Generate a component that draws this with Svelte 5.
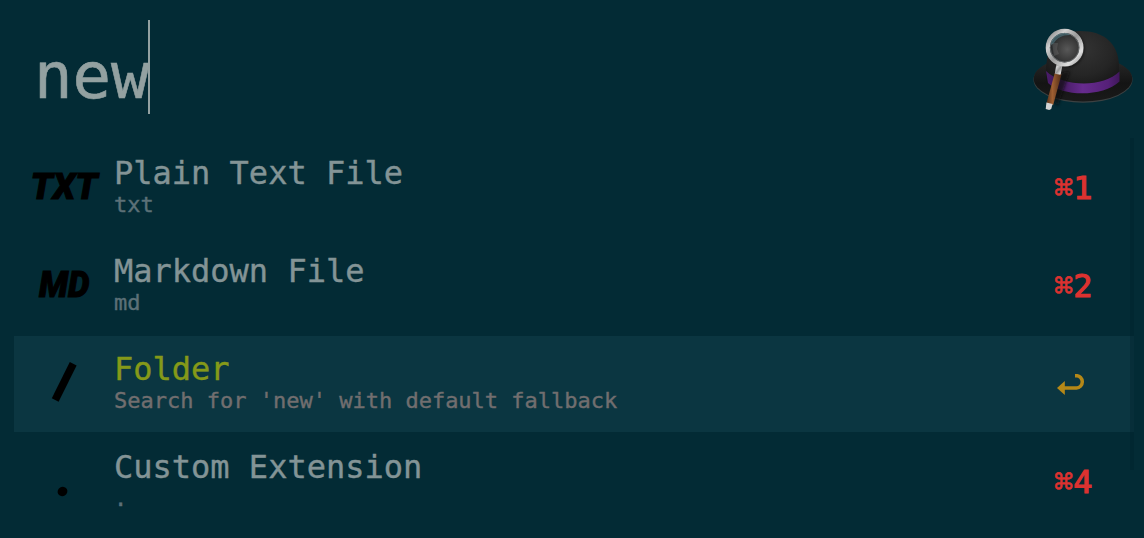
<script>
  const results = [
    { icon: 'TXT', width: 67, left: 16.5, title: 'Plain Text File', subtitle: 'txt', key: '1' },
    { icon: 'MD', width: 50.5, left: 25, title: 'Markdown File', subtitle: 'md', key: '2' },
    { icon: 'slash', title: 'Folder', subtitle: "Search for 'new' with default fallback", selected: true },
    { icon: 'dot', title: 'Custom Extension', subtitle: '.', key: '4' }
  ];
</script>

<main class="launcher">
  <header>
    <div class="query"><span>new</span><i class="caret"></i></div>
    <svg class="hat" viewBox="0 0 124 105" width="124" height="105" aria-hidden="true">
      <defs>
        <radialGradient id="crown" cx=".5" cy=".3" r=".7">
          <stop offset="0" stop-color="#333" /><stop offset=".6" stop-color="#252525" /><stop offset="1" stop-color="#141414" />
        </radialGradient>
        <linearGradient id="brim" x1="0" y1="0" x2="0" y2="1">
          <stop offset="0" stop-color="#2b2b2b" /><stop offset=".6" stop-color="#141414" /><stop offset="1" stop-color="#1a1a1a" />
        </linearGradient>
        <linearGradient id="band" x1="0" x2="1">
          <stop offset="0" stop-color="#4c1d6c" /><stop offset=".15" stop-color="#3d1857" /><stop offset=".5" stop-color="#672b8e" /><stop offset=".85" stop-color="#552078" /><stop offset="1" stop-color="#3f175a" />
        </linearGradient>
        <linearGradient id="rim" x1="0" y1="0" x2="1" y2="1">
          <stop offset="0" stop-color="#777" /><stop offset=".25" stop-color="#d0d0d0" /><stop offset=".5" stop-color="#999" /><stop offset=".8" stop-color="#e0e0e0" /><stop offset="1" stop-color="#888" />
        </linearGradient>
        <radialGradient id="lens" cx=".58" cy=".55" r=".55">
          <stop offset="0" stop-color="#585858" /><stop offset=".6" stop-color="#393939" /><stop offset="1" stop-color="#202427" />
        </radialGradient>
        <linearGradient id="wood" x1="0" x2="1">
          <stop offset="0" stop-color="#57301a" /><stop offset=".4" stop-color="#9e5f32" /><stop offset="1" stop-color="#4f2b16" />
        </linearGradient>
        <filter id="soft" x="-.5" y="-.5" width="2" height="2"><feGaussianBlur stdDeviation="1.5" /></filter>
      </defs>
      <ellipse cx="63" cy="64.8" rx="49.5" ry="23" fill="#3c4142" />
      <ellipse cx="63" cy="63.8" rx="49.3" ry="22.8" fill="url(#brim)" />
      <path d="M26 68V52C28 28 40 16 60 16c25 0 38 13 39 34v18C85 79 42 82 26 68Z" fill="url(#crown)" />
      <path d="M26 56C43 72 83 73 99.5 56.5v10C83 82 43 82 28 68Z" fill="url(#band)" />
      <path d="M41 58 50 56 38 91 31 84Z" fill="#090909" opacity=".65" filter="url(#soft)" />
      <circle cx="46.5" cy="34" r="18" fill="#080808" opacity=".6" filter="url(#soft)" />
      <path d="m34.8 58 6.8 1-8.4 31-6.8-1.4Z" fill="url(#wood)" />
      <path d="m36.2 50 6.2.5-1.8 9.2-5.8-1Z" fill="url(#rim)" />
      <path d="m26.4 87.5 6.2 1.4-1.4 5-2 1.1-3.5-1Z" fill="#d3d3d3" />
      <circle cx="44.6" cy="32.7" r="16.8" fill="url(#lens)" stroke="url(#rim)" stroke-width="4.2" />
      <circle cx="44.6" cy="32.7" r="14.4" fill="none" stroke="#6f7273" stroke-width=".8" />
      <path d="M31 30c0-7 6-12 13-12 3 0 5 .5 6 2-8 0-13 3-16 8Z" fill="#568894" opacity=".5" />
      <path d="M32 28h6l-1 6 2 5-5 2Z" fill="#aaa" opacity=".18" />
    </svg>
  </header>

  <div class="results">
    {#each results as item}
      <div class="row" class:selected={item.selected}>
        <svg class="icon" width="100" height="96" viewBox="0 0 100 96" aria-hidden="true">
          {#if item.icon === 'slash'}
            <path d="M41.2 64 59.2 27.8" fill="none" stroke="#000" stroke-width="7.6" />
          {:else if item.icon === 'dot'}
            <ellipse cx="48.5" cy="57.5" rx="5" ry="4.6" transform="rotate(-30 48.5 57.5)" />
          {:else}
            <text x={item.left} y="59" textLength={item.width} lengthAdjust="spacingAndGlyphs">{item.icon}</text>
          {/if}
        </svg>
        <div class="copy">
          <div class="title">{item.title}</div>
          <div class="subtitle">{item.subtitle}</div>
        </div>
        <div class="shortcut">
          {#if item.selected}
            <svg class="return" width="30" height="26" viewBox="0 0 30 26" aria-label="Return">
              <path d="M18 1.7h1.5a5.8 6.1 0 0 1 0 12.2H7" fill="none" stroke="#b58817" stroke-width="3.5" />
              <path d="M0 13.9 7.8 6.9v14Z" fill="#b58817" />
            </svg>
          {:else}
            <span>⌘</span><span class="digit">{item.key}</span>
          {/if}
        </div>
      </div>
    {/each}
    <i class="scrollbar"></i>
  </div>
</main>

<style>
  :global(body) { margin: 0; background: #032b35; }
  .launcher { width: 1144px; height: 538px; box-sizing: border-box; overflow: hidden; background: #032b35; font-family: "DejaVu Sans Mono", monospace; }
  header { height: 140px; display: flex; justify-content: space-between; box-sizing: border-box; padding: 15px 0 0 34px; }
  .query { display: flex; height: 94px; margin-top: 5px; color: #93a1a1; font-size: 64px; line-height: 112px; -webkit-text-stroke: .6px #93a1a1; }
  .query span { width: 114px; }
  .caret { width: 2px; height: 94px; background: #93a1a1; }
  .hat { display: block; }
  .results { position: relative; display: flex; flex-direction: column; gap: 2px; padding: 0 10px 0 14px; }
  .row { display: flex; height: 96px; flex: none; }
  .selected { background: #0b3641; }
  .icon { flex: none; }
  .icon text { font: italic 900 36px Roboto, sans-serif; fill: #000; stroke: #000; stroke-width: 1px; }
  .copy { display: flex; flex: 1; flex-direction: column; padding-top: 14px; white-space: pre; -webkit-text-stroke: .4px; }
  .title { height: 37px; font-size: 32px; line-height: 38px; color: #839496; }
  .subtitle { height: 26px; font-size: 22px; line-height: 27px; color: #5c7077; }
  .selected .title { color: #859919; }
  .selected .subtitle { color: #716e6f; }
  .shortcut { display: flex; align-items: center; width: 80px; color: #dc3230; font-size: 32px; line-height: 38px; -webkit-text-stroke: .6px #dc3230; }
  .shortcut span { width: 19.27px; }
  .shortcut .digit { -webkit-text-stroke-width: 1.1px; }
  .return { margin: 5px 0 0 3px; }
  .scrollbar { position: absolute; top: -2px; right: 10px; width: 4px; height: 332px; background: #00202a; opacity: .35; }
</style>
